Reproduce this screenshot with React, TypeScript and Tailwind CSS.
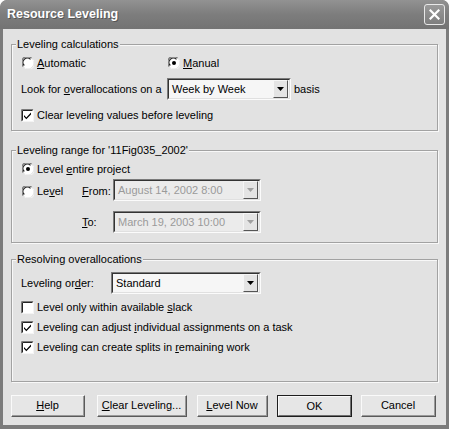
import React from "react";

const F = { fontFamily: '"Liberation Sans", Arial, sans-serif' };

function Radio({ checked }: { checked?: boolean }) {
  return (
    <svg width="12" height="12" viewBox="0 0 12 12" className="shrink-0">
      <circle cx="6" cy="6" r="5.5" fill="#ffffff" />
      <path d="M1.2 9.5 A5.5 5.5 0 0 1 9.5 1.2" fill="none" stroke="#7a7a7a" strokeWidth="1.2" />
      <path d="M2.3 8.5 A4.3 4.3 0 0 1 8.5 2.3" fill="none" stroke="#222" strokeWidth="1.2" />
      <path d="M10.8 2.5 A5.5 5.5 0 0 1 2.5 10.8" fill="none" stroke="#f4f4f4" strokeWidth="1" />
      {checked && <circle cx="6" cy="6" r="2" fill="#000" />}
    </svg>
  );
}

function Check({ checked }: { checked?: boolean }) {
  return (
    <svg width="13" height="13" viewBox="0 0 13 13" className="shrink-0">
      <rect x="0" y="0" width="13" height="13" fill="#ffffff" />
      <path d="M0.5 12.5 V0.5 H12.5" fill="none" stroke="#7a7a7a" />
      <path d="M1.5 11.5 V1.5 H11.5" fill="none" stroke="#222" />
      <path d="M0.5 12.5 H12.5 V0.5" fill="none" stroke="#f4f4f4" />
      {checked && (
        <path d="M3 6 L5.3 8.4 L10 3.6 L10 5.4 L5.3 10.2 L3 7.8 Z" fill="#000" />
      )}
    </svg>
  );
}

function DropBtn({ disabled }: { disabled?: boolean }) {
  return (
    <div className="w-[15px] h-[18px] bg-[#e4e4e4] border-t border-l border-t-[#f6f6f6] border-l-[#f6f6f6] border-r border-b border-r-[#555] border-b-[#555] flex items-center justify-center shrink-0">
      <svg width="7" height="4" viewBox="0 0 7 4">
        <path d="M0 0 H7 L3.5 4 Z" fill={disabled ? "#a0a0a0" : "#000"} />
      </svg>
    </div>
  );
}

function Combo({ text, w, disabled }: { text: string; w: string; disabled?: boolean }) {
  return (
    <div className={`${w} h-[22px] border border-t-[#7a7a7a] border-l-[#7a7a7a] border-r-[#fbfbfb] border-b-[#fbfbfb] shrink-0`}>
      <div
        className={`h-full border border-t-[#333] border-l-[#333] border-r-[#e0e0e0] border-b-[#e0e0e0] flex items-center justify-between pl-[3px] pr-[1px] ${
          disabled ? "bg-[#ebebeb] text-[#9a9a9a]" : "bg-[#f6f6f6] text-black"
        }`}
      >
        <span>{text}</span>
        <DropBtn disabled={disabled} />
      </div>
    </div>
  );
}

function Group({ title, h, children, className }: { title: string; h: string; children: React.ReactNode; className?: string }) {
  return (
    <div className={`relative ${h} border border-[#a2a2a2] shadow-[inset_1px_1px_0_#f8f8f8,1px_1px_0_#f8f8f8] ${className ?? ""}`}>
      <span className="absolute left-[4px] -top-[7px] px-[1px] bg-[#e2e2e2] leading-[13px]">{title}</span>
      {children}
    </div>
  );
}

function Btn({ children, w, ml, def }: { children: React.ReactNode; w: string; ml?: string; def?: boolean }) {
  return (
    <div
      className={`${w} ${ml ?? ""} h-[22px] shrink-0 ${
        def ? "border border-[#1e1e1e]" : "border border-t-[#fafafa] border-l-[#fafafa] border-r-[#5a5a5a] border-b-[#5a5a5a]"
      }`}
    >
      <div
        className={`h-full flex items-center justify-center bg-[#e6e6e6] ${
          def
            ? "border border-t-[#fafafa] border-l-[#fafafa] border-r-[#707070] border-b-[#707070]"
            : "border-r border-b border-r-[#9a9a9a] border-b-[#9a9a9a]"
        }`}
      >
        {children}
      </div>
    </div>
  );
}

export default function App() {
  return (
    <div style={F} className="w-[449px] h-[429px] bg-[#7b7b7b] rounded-t-[7px] flex flex-col text-[11px] text-black overflow-hidden">
      <div className="h-[29px] shrink-0 flex items-center justify-between pl-[7px] pr-[4px] bg-gradient-to-b from-[#929292] via-[#7d7d7d] to-[#737373] rounded-t-[7px]">
        <span className="text-white font-bold text-[12.5px] [text-shadow:1px_1px_0_#555]">Resource Leveling</span>
        <div className="w-[21px] h-[21px] rounded-[3px] border border-[#e8e8e8] bg-gradient-to-b from-[#9a9a9a] to-[#7e7e7e] flex items-center justify-center">
          <svg width="11" height="11" viewBox="0 0 11 11">
            <path d="M1.5 1.5 L9.5 9.5 M9.5 1.5 L1.5 9.5" stroke="#fff" strokeWidth="2.2" strokeLinecap="square" />
          </svg>
        </div>
      </div>

      <div className="flex-1 mx-[3px] mb-[4px] bg-[#e2e2e2] px-[8px] pt-[15px] flex flex-col">
        <Group title="Leveling calculations" h="h-[87px]">
          <div className="pl-[10px] mt-[10px] h-[16px] flex items-center">
            <div className="w-[146px] flex items-center gap-[3px]">
              <Radio />
              <span>
                <u>A</u>utomatic
              </span>
            </div>
            <div className="flex items-center gap-[3px]">
              <Radio checked />
              <span>
                <u>M</u>anual
              </span>
            </div>
          </div>
          <div className="pl-[9px] mt-[7px] h-[22px] flex items-center">
            <span className="w-[146px] shrink-0">
              Look for <u>o</u>verallocations on a
            </span>
            <Combo text="Week by Week" w="w-[124px]" />
            <span className="ml-[3px]">basis</span>
          </div>
          <div className="pl-[9px] mt-[7px] h-[16px] flex items-center gap-[3px]">
            <Check checked />
            <span>
              Clear levelin<u>g</u> values before leveling
            </span>
          </div>
        </Group>

        <Group title="Leveling range for '11Fig035_2002'" h="h-[93px]" className="mt-[19px]">
          <div className="pl-[10px] mt-[10px] h-[16px] flex items-center gap-[3px]">
            <Radio checked />
            <span>
              Level <u>e</u>ntire project
            </span>
          </div>
          <div className="pl-[10px] mt-[2px] h-[22px] flex items-center">
            <div className="w-[60px] flex items-center gap-[3px] pt-[3px]">
              <Radio />
              <span>
                Le<u>v</u>el
              </span>
            </div>
            <span className="w-[31px] pt-[3px]">
              <u>F</u>rom:
            </span>
            <Combo text="August 14, 2002 8:00" w="w-[148px]" disabled />
          </div>
          <div className="pl-[70px] mt-[10px] h-[22px] flex items-center">
            <span className="w-[31px]">
              <u>T</u>o:
            </span>
            <Combo text="March 19, 2003 10:00" w="w-[148px]" disabled />
          </div>
        </Group>

        <Group title="Resolving overallocations" h="h-[123px]" className="mt-[16px]">
          <div className="pl-[9px] mt-[12px] h-[22px] flex items-center">
            <span className="w-[90px] shrink-0">
              Leveling or<u>d</u>er:
            </span>
            <Combo text="Standard" w="w-[150px]" />
          </div>
          <div className="pl-[9px] mt-[5px] flex flex-col gap-[4px]">
            <div className="h-[16px] flex items-center gap-[3px]">
              <Check />
              <span>
                Level only within available <u>s</u>lack
              </span>
            </div>
            <div className="h-[16px] flex items-center gap-[3px]">
              <Check checked />
              <span>
                Leveling can adjust <u>i</u>ndividual assignments on a task
              </span>
            </div>
            <div className="h-[16px] flex items-center gap-[3px]">
              <Check checked />
              <span>
                Leveling can create splits in <u>r</u>emaining work
              </span>
            </div>
          </div>
        </Group>

        <div className="mt-[13px] flex">
          <Btn w="w-[74px]">
            <span>
              <u>H</u>elp
            </span>
          </Btn>
          <Btn w="w-[90px]" ml="ml-[12px]">
            <span>
              <u>C</u>lear Leveling...
            </span>
          </Btn>
          <Btn w="w-[71px]" ml="ml-[10px]">
            <span>
              <u>L</u>evel Now
            </span>
          </Btn>
          <Btn w="w-[75px]" ml="ml-[9px]" def>
            <span>OK</span>
          </Btn>
          <Btn w="w-[75px]" ml="ml-[9px]">
            <span>Cancel</span>
          </Btn>
        </div>
      </div>
    </div>
  );
}
